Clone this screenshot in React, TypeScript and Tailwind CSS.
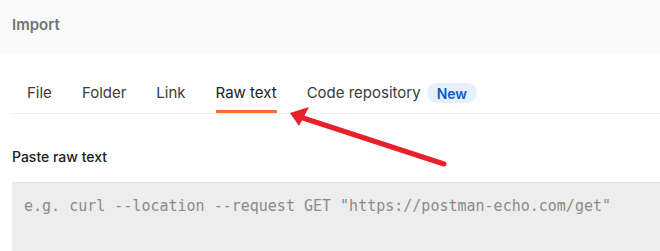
const tabs = ["File", "Folder", "Link", "Raw text", "Code repository"];

export default function App() {
  return (
    <div className="relative h-[251px] w-[660px] overflow-hidden bg-white font-['Inter',sans-serif]">
      <div className="h-[53px] bg-[#f9f9f9] px-3 pt-[12px]">
        <span className="text-[15px] font-semibold leading-[18px] text-[#737373]">Import</span>
      </div>

      <div className="ml-3 mt-[30px] flex border-b border-[#f0f0f0] pl-[15px]">
        {tabs.map((t) => (
          <div key={t} className="mr-[30px] flex items-center">
            <span
              className={
                "block border-b-[3px] pb-[7px] text-[15px] leading-[20px] " +
                (t === "Raw text" ? "border-[#ff6c37] text-[#212121]" : "border-transparent text-[#3b3b3b]")
              }
            >
              {t}
            </span>
            {t === "Code repository" && (
              <span className="-mt-[10px] ml-[6px] flex h-[20px] items-center rounded-full bg-[#e7f0fd] px-[10px] text-[14px] font-semibold text-[#0b5cc5]">
                New
              </span>
            )}
          </div>
        ))}
      </div>

      <div className="pl-3 pt-[34px]">
        <div className="text-[14px] font-medium leading-[17px] text-[#212121]">Paste raw text</div>
        <div className="mt-[17px] h-[80px] border-t border-[#e2e2e2] bg-[#ededed] px-3 pt-[10px]">
          <span className="font-['DejaVu_Sans_Mono',monospace] text-[15px] text-[#8a8a8a]">
            e.g. curl --location --request GET "https://postman-echo.com/get"
          </span>
        </div>
      </div>

      <svg className="absolute left-0 top-0" width="660" height="251" viewBox="0 0 660 251">
        <line x1="444" y1="164" x2="300" y2="117" stroke="#e8202a" strokeWidth="5" strokeLinecap="round" />
        <polygon points="290,113 309,107 299,126" fill="#e8202a" />
      </svg>
    </div>
  );
}
